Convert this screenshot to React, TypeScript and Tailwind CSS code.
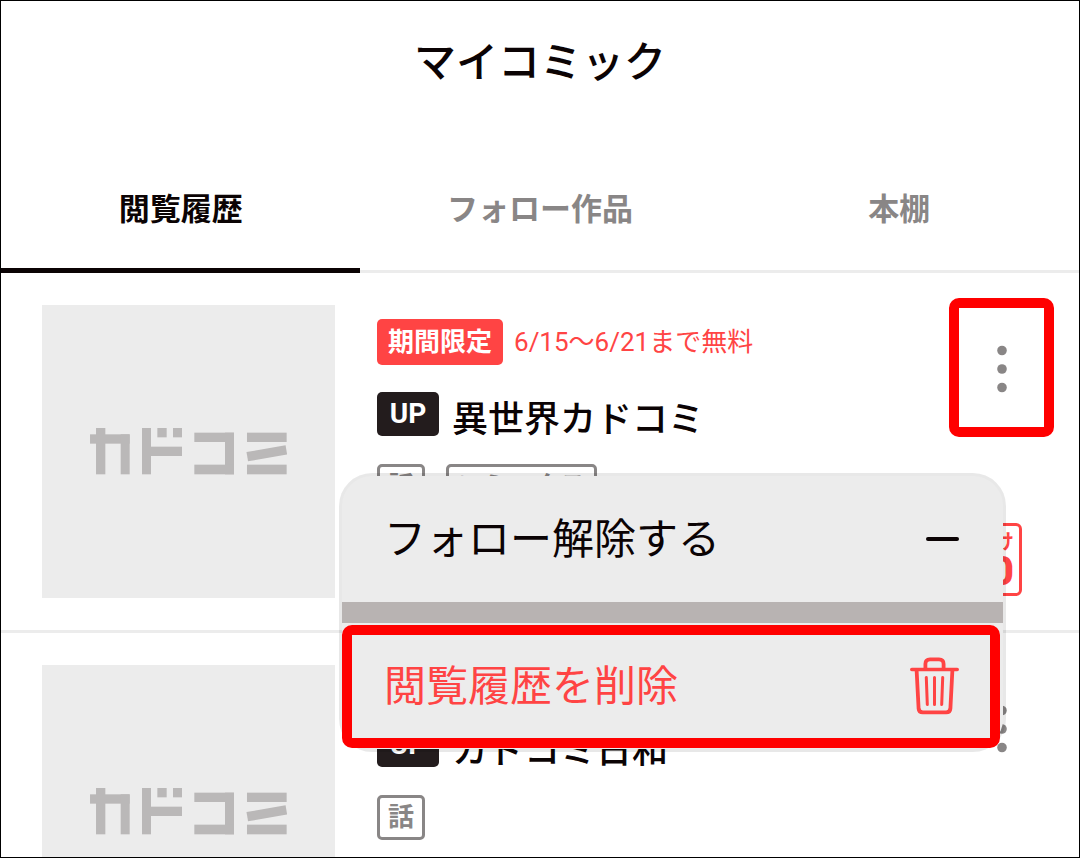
import { useState } from 'react';

const tabs = ['閲覧履歴', 'フォロー作品', '本棚']

const comics = [
    { title: '異世界カドコミ', period: '6/15〜6/21まで無料', tags: ['話', 'コミックス'], free: true },
    { title: 'カドコミ日和', period: '', tags: ['話'], free: false },
]

function KadocomiLogo() {
    return (
        <svg className="w-[197px]" viewBox="0 0 591 140" fill="#bab8b8" role="img" aria-label="カドコミ">
            <rect x="0" y="19" width="119" height="28" />
            <rect x="18" y="0" width="28" height="139" />
            <rect x="92" y="19" width="27" height="120" />

            <rect x="156" y="0" width="27" height="139" />
            <rect x="156" y="56" width="120" height="28" />
            <rect x="202" y="0" width="28" height="28" />
            <rect x="249" y="0" width="27" height="28" />

            <rect x="313" y="14" width="119" height="28" />
            <rect x="405" y="14" width="27" height="125" />
            <rect x="313" y="110" width="119" height="29" />

            <rect x="471" y="14" width="119" height="28" />
            <rect x="471" y="62" width="119" height="28" transform="rotate(-9.8 530 76)" />
            <rect x="471" y="110" width="119" height="29" />
        </svg>
    )
}

function DotsIcon() {
    return (
        <svg className="w-[10px]" viewBox="0 0 10 48" fill="#898686" aria-hidden="true">
            <circle cx="5" cy="5.5" r="4.8" />
            <circle cx="5" cy="24" r="4.8" />
            <circle cx="5" cy="42.5" r="4.8" />
        </svg>
    )
}

function MinusIcon() {
    return (
        <svg className="w-[33px]" viewBox="0 0 33 4" fill="#0b0304" aria-hidden="true">
            <rect width="33" height="4" rx="2" />
        </svg>
    )
}

function TrashIcon() {
    return (
        <svg className="w-[49px]" viewBox="0 0 49 58" fill="none" stroke="#ff4444" strokeLinecap="round" strokeLinejoin="round" aria-hidden="true">
            <path strokeWidth="3.6" d="M1.8 12.5H47.2" />
            <path strokeWidth="3.8" d="M15.4 12V7Q15.4 2.4 20 2.4H29Q33.6 2.4 33.6 7V12" />
            <path strokeWidth="3.8" d="M6.6 13L8.6 51.5Q8.9 55.4 12.8 55.4H36.2Q40.1 55.4 40.4 51.5L42.4 13" />
            <path strokeWidth="3" d="M16.3 20.5L17.3 47.5M24.5 20.5V47.5M32.7 20.5L31.7 47.5" />
        </svg>
    )
}

function ComicMenu() {
    return (
        <div role="menu" className="absolute left-[341px] right-[76px] top-[203px] z-10 rounded-[30px] bg-[#ececec] shadow-[0_0_0_3px_rgba(0,0,0,0.09)]">
            <button role="menuitem" className="flex w-full items-center justify-between py-8 pl-[42px] pr-11 text-[42px] leading-[62px] text-[#0b0304]">
                <span className="pt-[2px] leading-[60px]">フォロー解除する</span>
                <MinusIcon />
            </button>
            <div className="h-[21px] bg-[#b8b3b2]"></div>
            <button role="menuitem" className="relative flex w-full items-center justify-between py-8 pl-[42px] pr-11 text-[42px] leading-[62px] text-[#ff4444]">
                <span className="pt-[2px] leading-[60px]">閲覧履歴を削除</span>
                <TrashIcon />
                <span className="absolute bottom-px left-0 right-[3px] top-[2px] rounded-[10px] border-[10px] border-[#ff0000]"></span>
            </button>
        </div>
    )
}

export default function App() {
    const [tab, setTab] = useState('閲覧履歴')

    return (
        <div className="h-screen overflow-hidden border border-black bg-white font-['Roboto','Noto_Sans_CJK_JP',sans-serif] text-[#0b0304]">
            <header className="pb-[55px] pt-8">
                <h1 className="text-center text-[42px] font-medium leading-[60px]">マイコミック</h1>
            </header>

            <nav className="grid grid-cols-3">
                {tabs.map((name) => (
                    <button
                        key={name}
                        onClick={() => setTab(name)}
                        className={name === tab
                            ? 'border-b-5 border-[#0b0304] pb-[34px] pt-[38px] text-[31px] font-bold leading-[48px]'
                            : 'border-b-3 border-[#ececec] pb-9 pt-[38px] text-[31px] font-bold leading-[48px] text-[#898686]'}
                    >
                        {name}
                    </button>
                ))}
            </nav>

            <ul>
                {comics.map((comic) => (
                    <li key={comic.title} className="relative flex items-start border-b-3 border-[#ececec] pl-[41px] pr-[25px]">
                        <div className="my-8 flex size-[293px] shrink-0 items-center justify-center bg-[#ececec]">
                            <KadocomiLogo />
                        </div>

                        <div className={comic.period ? 'ml-[42px] mt-[46px] flex-1' : 'ml-[42px] mt-[90px] flex-1'}>
                            {comic.period && (
                                <div className="mb-[27px] flex items-center gap-[11px] text-[26px] leading-[46px] text-[#ff4444]">
                                    <span className="rounded-[5px] bg-[#ff4444] px-[11px] font-bold text-white">期間限定</span>
                                    <span>{comic.period}</span>
                                </div>
                            )}
                            <div className="mb-4 flex items-start gap-[13px]">
                                <span className="w-[62px] rounded-[5px] bg-[#231c1d] text-center text-[28px] font-bold leading-[44px] text-white">UP</span>
                                <h2 className="text-[36px] font-medium leading-[56px]">{comic.title}</h2>
                            </div>
                            <div className="flex gap-[21px]">
                                {comic.tags.map((tag) => (
                                    <span key={tag} className="rounded-[5px] border-3 border-[#898686] px-2 text-[26px] font-bold leading-[39px] text-[#898686]">{tag}</span>
                                ))}
                            </div>
                        </div>

                        <div className="mt-[25px] flex w-[105px] flex-col">
                            <button aria-label="メニュー" className="relative flex h-[142px] items-center justify-center">
                                <DotsIcon />
                                {comic.free && <span className="absolute inset-x-0 top-0 h-[139px] rounded-[10px] border-[10px] border-[#ff0000]"></span>}
                            </button>
                            {comic.free && (
                                <div className="mr-8 mt-[83px] flex h-[73px] flex-col items-end self-end whitespace-nowrap rounded-[6px] border-3 border-[#ff4444] px-[5px] pt-[5px] font-bold text-[#ff4444]">
                                    <span className="text-[20px] leading-[22px]">今だけ</span>
                                    <span className="text-[40px] font-black leading-[38px]">¥0</span>
                                </div>
                            )}
                        </div>

                        {comic.free && <ComicMenu />}
                    </li>
                ))}
            </ul>
        </div>
    );
}
